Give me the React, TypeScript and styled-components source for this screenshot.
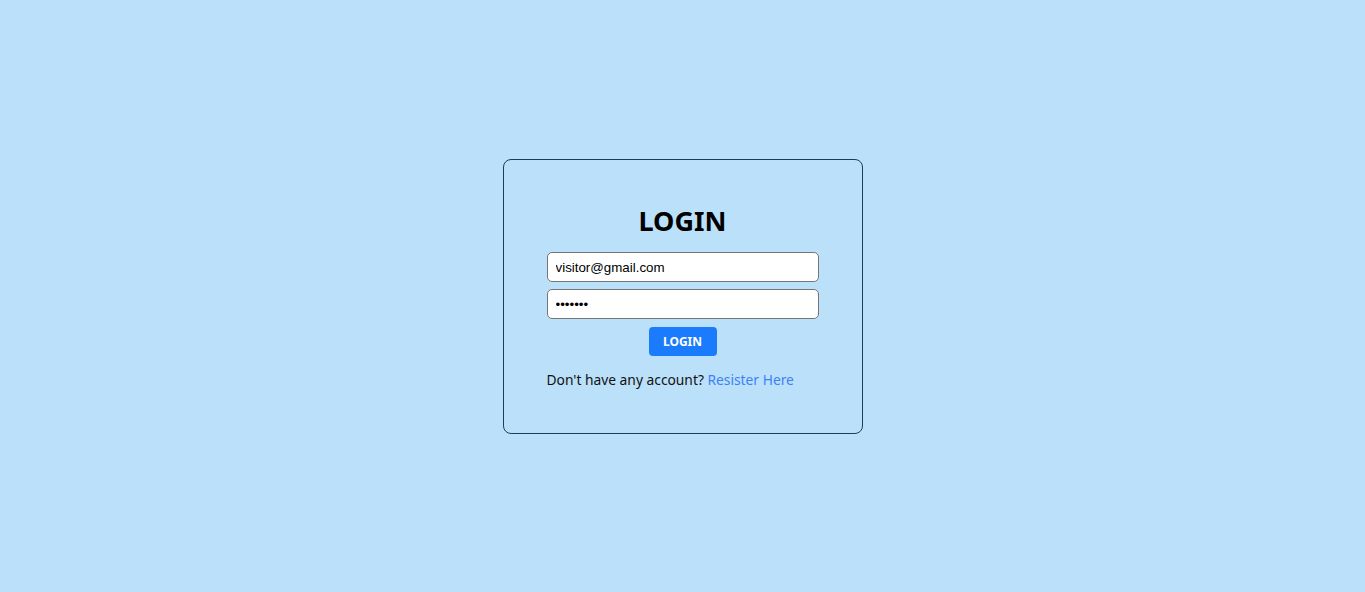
import styled, { createGlobalStyle } from "styled-components";

const GlobalStyle = createGlobalStyle`
  html, body {
    margin: 0;
    padding: 0;
    background: #bbe0f9;
  }
  body {
    font-family: "Noto Sans", "Open Sans", sans-serif;
  }
`;

const Page = styled.div`
  height: 592px;
  display: flex;
  align-items: flex-start;
  justify-content: center;
  padding-top: 159px;
  box-sizing: border-box;
`;

const Card = styled.form`
  width: 360px;
  height: 275px;
  box-sizing: border-box;
  border: 1px solid #17405f;
  border-radius: 8px;
  padding: 42px 43px 0;
  display: flex;
  flex-direction: column;
  align-items: center;
`;

const Title = styled.h1`
  margin: 0 0 12px;
  font-size: 27px;
  line-height: 38px;
  font-weight: 700;
  color: #000;
`;

const Input = styled.input`
  width: 100%;
  height: 30px;
  box-sizing: border-box;
  margin-bottom: 7px;
  padding: 0 8px;
  border: 1px solid #767676;
  border-radius: 5px;
  background: #fff;
  font-family: "Liberation Sans", Arial, sans-serif;
  font-size: 13.33px;
  color: #000;
  outline: none;
`;

const Button = styled.button`
  width: 68px;
  height: 29px;
  margin-top: 1px;
  border: none;
  border-radius: 4px;
  background: #1a7cfc;
  color: #fff;
  font-family: "Noto Sans", sans-serif;
  font-weight: 700;
  font-size: 12px;
  cursor: pointer;
`;

const Footer = styled.p`
  align-self: stretch;
  margin: 14px 0 0;
  font-size: 13.8px;
  line-height: 20px;
  color: #111;
`;

const Link = styled.a`
  color: #3b82f6;
  text-decoration: none;
`;

export default function App() {
  return (
    <>
      <GlobalStyle />
      <Page>
        <Card onSubmit={(e) => e.preventDefault()}>
          <Title>LOGIN</Title>
          <Input type="email" defaultValue="visitor@gmail.com" />
          <Input type="password" defaultValue="1234567" />
          <Button type="submit">LOGIN</Button>
          <Footer>
            Don't have any account? <Link href="#">Resister Here</Link>
          </Footer>
        </Card>
      </Page>
    </>
  );
}
